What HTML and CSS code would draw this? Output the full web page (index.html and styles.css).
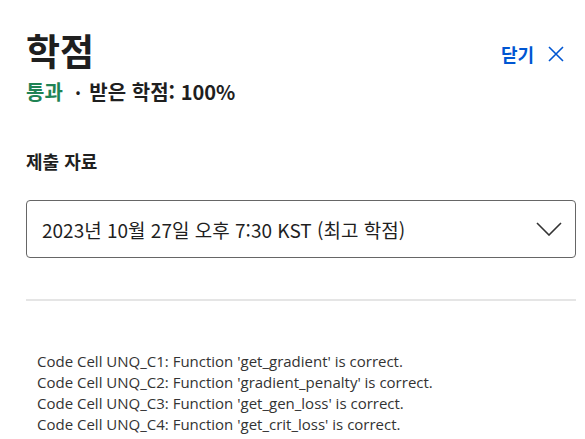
FILE: index.html
```html
<!DOCTYPE html>
<html lang="ko">
<head>
<meta charset="utf-8">
<link rel="stylesheet" href="styles.css">
</head>
<body>
<div class="panel">
  <header class="head">
    <div class="titles">
      <h1 class="title">학점</h1>
      <div class="status"><span class="pass">통과</span><span class="dot">•</span><span>받은 학점: 100%</span></div>
    </div>
    <button class="close">닫기
      <svg class="x" width="16" height="16" viewBox="0 0 16 16"><path d="M1 1L15 15M15 1L1 15" stroke="#0056d2" stroke-width="1.6" fill="none"/></svg>
    </button>
  </header>
  <h2 class="section">제출 자료</h2>
  <div class="select">
    <span>2023년 10월 27일 오후 7:30 KST (최고 학점)</span>
    <svg class="chev" width="26" height="14" viewBox="0 0 26 14"><path d="M1 1L13 13L25 1" stroke="#333" stroke-width="1.6" fill="none"/></svg>
  </div>
  <hr class="divider">
  <div class="log">
    <div>Code Cell UNQ_C1: Function 'get_gradient' is correct.</div>
    <div>Code Cell UNQ_C2: Function 'gradient_penalty' is correct.</div>
    <div>Code Cell UNQ_C3: Function 'get_gen_loss' is correct.</div>
    <div>Code Cell UNQ_C4: Function 'get_crit_loss' is correct.</div>
  </div>
</div>
</body>
</html>
```
FILE: styles.css
```css
html, body { margin: 0; padding: 0; background: #fff; }
body { font-family: "Noto Sans CJK KR", "Noto Sans", sans-serif; color: #1f1f1f; }
.panel { padding: 26px 9px 0 26px; }
.head { display: flex; justify-content: space-between; align-items: flex-start; }
.title { margin: 0; font-size: 37px; font-weight: 700; line-height: 48px; }
.status { margin-top: 6px; font-size: 20px; font-weight: 700; line-height: 24px; display: flex; align-items: center; }
.pass { color: #1f8354; }
.dot { margin: 0 9px 0 13px; font-size: 12px; }
.close { margin-top: 15px; margin-right: 12px; background: none; border: 0; padding: 0; display: flex; align-items: center; gap: 14px; font-family: inherit; font-size: 18px; font-weight: 700; color: #0056d2; }
.section { margin: 44px 0 0; font-size: 18px; font-weight: 700; line-height: 26px; }
.select { margin-top: 26px; height: 56px; border: 1px solid #666; border-radius: 4px; display: flex; align-items: center; justify-content: space-between; padding: 0 13px 0 15px; font-size: 19px; }
.divider { margin: 41px 0 0; border: 0; border-top: 2px solid #e5e5e5; }
.log { margin-top: 50px; padding-left: 11px; font-family: "Open Sans", sans-serif; font-size: 15px; line-height: 21px; color: #333; }
```
